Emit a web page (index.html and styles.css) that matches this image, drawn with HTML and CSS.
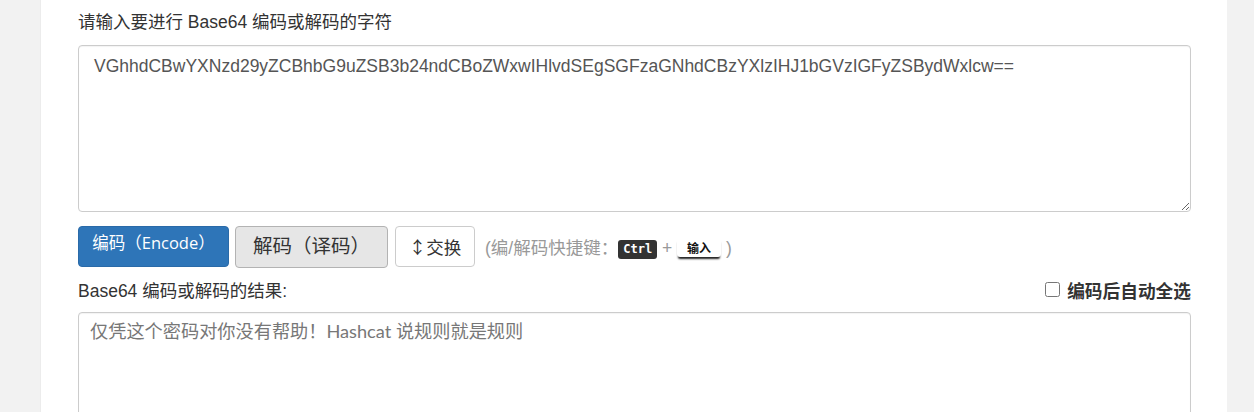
FILE: index.html
```html
<!DOCTYPE html>
<html>
<head>
	<title>Base64 编码/解码</title>
	<meta charset="utf-8">
	<link rel="stylesheet" href="styles.css">
</head>
<body>
	<div class="panel">
		<div class="label">请输入要进行 Base64 编码或解码的字符</div>
		<textarea class="source" id="src">VGhhdCBwYXNzd29yZCBhbG9uZSB3b24ndCBoZWxwIHlvdSEgSGFzaGNhdCBzYXlzIHJ1bGVzIGFyZSBydWxlcw==</textarea>
		<div class="actions">
			<button class="btn btn-encode">编码（Encode）</button>
			<button class="btn btn-decode">解码（译码）</button>
			<button class="btn btn-swap">↕交换</button>
			<span class="hint">(编/解码快捷键：<kbd class="key-dark">Ctrl</kbd> + <kbd class="key-light">输入</kbd> )</span>
		</div>
		<div class="result-head">
			<span>Base64 编码或解码的结果:</span>
			<label class="auto"><input type="checkbox"> 编码后自动全选</label>
		</div>
		<textarea class="result" placeholder="仅凭这个密码对你没有帮助！Hashcat 说规则就是规则"></textarea>
	</div>
</body>
</html>
```

FILE: styles.css
```css
html, body {
	margin: 0;
	padding: 0;
	background: #f2f2f2;
	color: #333;
	font-family: "Liberation Sans", "Noto Sans CJK SC", sans-serif;
	font-size: 17.5px;
	overflow: hidden;
}

.panel {
	margin-left: 40px;
	width: 1113px;
	height: 402px;
	background: #fff;
	border-left: 1px solid #ececec;
	padding: 10px 36px 0 37px;
	overflow: hidden;
}

.label {
	line-height: 24px;
	margin-bottom: 11px;
}

textarea {
	display: block;
	box-sizing: border-box;
	width: 1113px;
	border: 1px solid #ccc;
	border-radius: 4px;
	box-shadow: inset 0 1px 1px rgba(0, 0, 0, 0.05);
	color: #555;
	margin: 0;
	outline: none;
}

.source {
	height: 167px;
	padding: 8px 15px;
	font-family: "Liberation Sans", sans-serif;
	font-size: 17.5px;
	line-height: 24px;
}

.actions {
	display: flex;
	align-items: center;
	margin-top: 13px;
	height: 43px;
}

.btn {
	box-sizing: border-box;
	height: 41px;
	border-radius: 4px;
	margin-right: 6px;
	font-family: "Open Sans", "Noto Sans CJK SC", sans-serif;
	cursor: pointer;
}

.btn-encode {
	width: 151px;
	background: #2e75b8;
	border: 1px solid #2a6aa8;
	color: #fff;
	font-size: 16.5px;
	padding: 0 0 10px;
}

.btn-decode {
	width: 153px;
	height: 42px;
	background: #e6e6e6;
	border: 1px solid #b3b3b3;
	color: #333;
	font-size: 19.5px;
	padding: 0 0 4px;
}

.btn-swap {
	width: 80px;
	background: #fff;
	border: 1px solid #ccc;
	color: #333;
	font-size: 17.5px;
	margin-left: 1px;
	margin-right: 10px;
	padding: 0;
}

.hint {
	color: #999;
	font-size: 17.5px;
}

kbd {
	display: inline-block;
	font-size: 12px;
	line-height: 19px;
	padding: 0 5px;
	border-radius: 3px;
	vertical-align: 1px;
}

.key-dark {
	background: #333;
	color: #fff;
	font-family: "DejaVu Sans Mono", monospace;
	font-weight: bold;
}

.key-light {
	color: #111;
	font-family: "Noto Sans CJK SC", sans-serif;
	font-weight: bold;
	padding: 0 10px;
	box-shadow: 0 3px 2px -1px #222;
}

.result-head {
	display: flex;
	justify-content: space-between;
	align-items: center;
	margin-top: 9px;
	height: 25px;
	margin-bottom: 10px;
}

.auto {
	display: flex;
	align-items: center;
	font-weight: bold;
	font-family: "Noto Sans CJK SC", sans-serif;
	font-size: 17.7px;
}

.auto input {
	width: 15px;
	height: 15px;
	margin: 0 7px 0 0;
}

.result {
	height: 140px;
	padding: 6px 11px;
	font-family: Lato, "Noto Sans CJK SC", sans-serif;
	font-size: 18.2px;
	line-height: 24px;
}

.result::placeholder {
	color: #777;
}
```
